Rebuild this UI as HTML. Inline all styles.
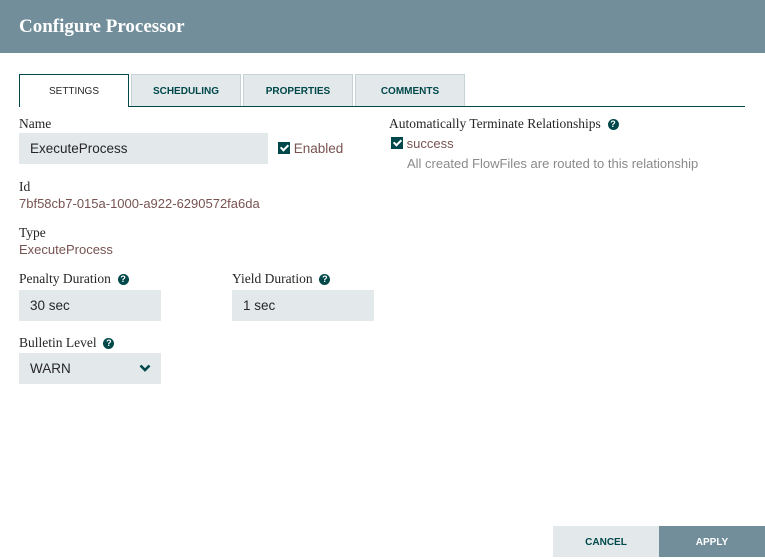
<!DOCTYPE html>
<html><head><style>
*{margin:0;padding:0;box-sizing:border-box}
body{width:765px;height:557px;background:#fff;position:relative;overflow:hidden;font-family:"Liberation Sans",sans-serif}
.a{position:absolute}
.hdr{left:0;top:0;width:765px;height:53px;background:#728e9b;color:#fff;font-family:"Liberation Serif",serif;font-weight:bold;font-size:19px;padding:16px 0 0 19px}
.tab{top:74px;height:32px;background:#e3e8eb;border:1px solid #c7d2d7;border-bottom:none;font-size:10px;font-weight:bold;color:#004849;text-align:center;line-height:33px}
.tab.on{background:#fff;border:1px solid #004849;border-bottom:none;color:#262626;font-weight:normal;height:33px;z-index:2}
.line{left:19px;top:106px;width:726px;height:1px;background:#004849}
.lbl{font-family:"Liberation Serif",serif;font-size:13.5px;color:#262626}
.val{font-size:13px;color:#775351}
.inp{background:#e3e8eb;font-size:13.5px;color:#262626;padding-left:11px;line-height:31px;height:31px}
.cb{width:12px;height:12px;background:#004849;display:inline-block;position:relative;vertical-align:-1px}
.cb:after{content:"";position:absolute;left:4px;top:1px;width:3px;height:6px;border:solid #fff;border-width:0 2px 2px 0;transform:rotate(45deg)}
.q{width:11px;height:11px;border-radius:50%;background:#004849;color:#fff;font-size:9px;font-weight:bold;text-align:center;line-height:11px;display:inline-block;font-family:"Liberation Sans",sans-serif;vertical-align:1px}
.btn{top:526px;height:31px;width:106px;font-size:10px;font-weight:bold;text-align:center;line-height:33px}
</style></head><body>
<div class="a hdr">Configure Processor</div>
<div class="a tab on" style="left:19px;width:110px">SETTINGS</div>
<div class="a tab" style="left:131px;width:110px">SCHEDULING</div>
<div class="a tab" style="left:243px;width:110px">PROPERTIES</div>
<div class="a tab" style="left:355px;width:110px">COMMENTS</div>
<div class="a line"></div>

<div class="a lbl" style="left:19px;top:116px">Name</div>
<div class="a inp" style="left:19px;top:133px;width:249px">ExecuteProcess</div>
<div class="a" style="left:278px;top:141px;font-size:13.5px;color:#775351"><span class="cb"></span> Enabled</div>

<div class="a lbl" style="left:19px;top:179px">Id</div>
<div class="a val" style="left:19px;top:196px">7bf58cb7-015a-1000-a922-6290572fa6da</div>
<div class="a lbl" style="left:19px;top:225px">Type</div>
<div class="a val" style="left:19px;top:242px">ExecuteProcess</div>

<div class="a lbl" style="left:19px;top:271px">Penalty Duration &nbsp;<span class="q">?</span></div>
<div class="a inp" style="left:19px;top:290px;width:142px">30 sec</div>
<div class="a lbl" style="left:232px;top:271px">Yield Duration &nbsp;<span class="q">?</span></div>
<div class="a inp" style="left:232px;top:290px;width:142px">1 sec</div>

<div class="a lbl" style="left:19px;top:335px">Bulletin Level &nbsp;<span class="q">?</span></div>
<div class="a inp" style="left:19px;top:353px;width:142px">WARN
<svg style="position:absolute;left:120px;top:11px" width="12" height="9" viewBox="0 0 12 9"><path d="M1.5 1.5 L6 6 L10.5 1.5" stroke="#004849" stroke-width="2.6" fill="none"/></svg></div>

<div class="a lbl" style="left:389px;top:116px">Automatically Terminate Relationships &nbsp;<span class="q">?</span></div>
<div class="a" style="left:391px;top:136px;font-size:13px;color:#775351"><span class="cb"></span> success</div>
<div class="a" style="left:407px;top:156px;font-size:13px;color:#8a8a8a">All created FlowFiles are routed to this relationship</div>

<div class="a btn" style="left:553px;background:#e3e8eb;color:#004849">CANCEL</div>
<div class="a btn" style="left:659px;background:#728e9b;color:#fff">APPLY</div>
</body></html>
